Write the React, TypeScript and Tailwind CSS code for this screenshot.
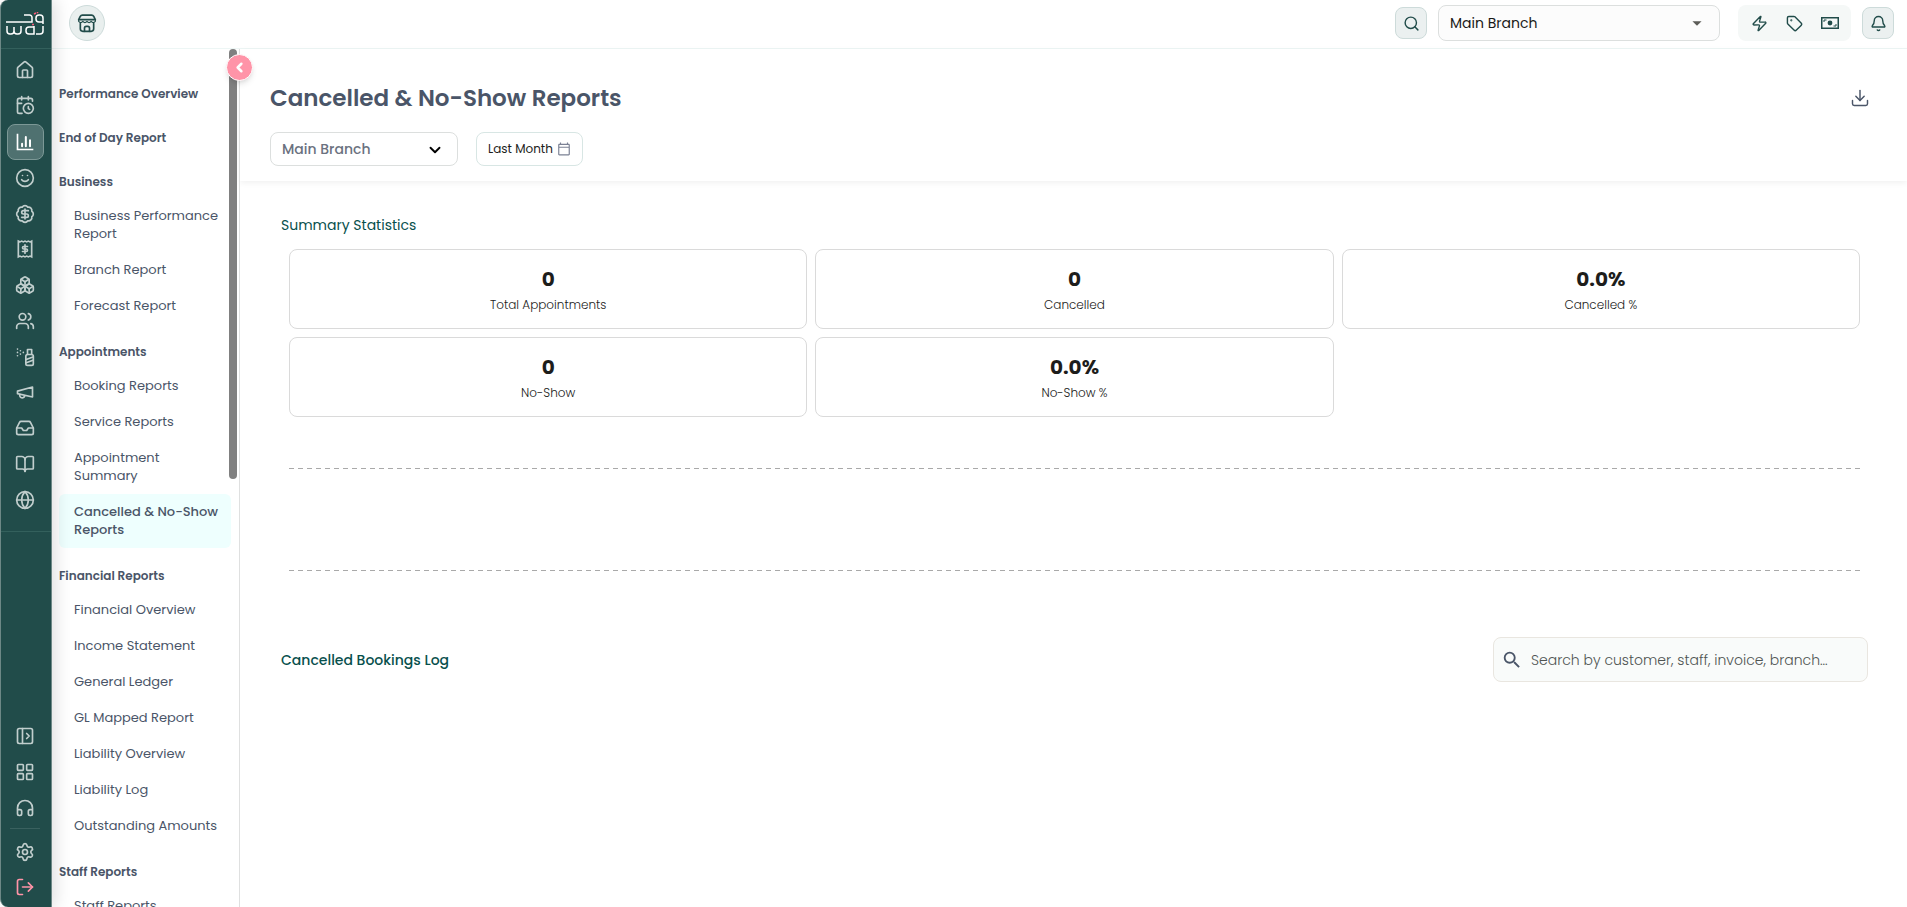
import type { ReactNode } from 'react';
import {
  BadgeDollarSign,
  Bell,
  BookOpen,
  Boxes,
  CalendarClock,
  ChevronDown,
  ChevronLeft,
  Download,
  Globe,
  Headphones,
  House,
  Inbox,
  LayoutGrid,
  LogOut,
  PanelLeftOpen,
  Search,
  Settings,
  Smile,
  Tag,
  Users,
  Zap,
} from 'lucide-react';
import { MdArrowDropDown, MdOutlineCalendarToday, MdSearch } from 'react-icons/md';

interface StrokeProps {
  className?: string;
  children: ReactNode;
}

function Stroke({ className = 'size-5', children }: StrokeProps) {
  return (
    <svg
      viewBox="0 0 24 24"
      className={className}
      fill="none"
      stroke="currentColor"
      strokeWidth="2"
      strokeLinecap="round"
      strokeLinejoin="round"
      aria-hidden="true"
    >
      {children}
    </svg>
  );
}

function ChartIcon() {
  return (
    <Stroke>
      <path d="M3 3v18h18" strokeLinecap="square" strokeLinejoin="miter" />
      <path d="M8.5 17v-3M13 17V6M18 17v-7" strokeWidth="2.4" />
    </Stroke>
  );
}

function ReceiptIcon() {
  return (
    <Stroke>
      <path
        d="M4 2.500l2 1 2-1 2 1 2-1 2 1 2-1 2 1 2-1v19l-2-1-2 1-2-1-2 1-2-1-2 1-2-1-2 1z"
        strokeLinejoin="miter"
      />
      <path d="M15 9h-4.500a1.500 1.500 0 0 0 0 3h3a1.500 1.500 0 0 1 0 3H9M12 7v10" />
    </Stroke>
  );
}

function SprayIcon() {
  return (
    <Stroke>
      <rect x="13" y="9" width="9" height="13" rx="2" />
      <path d="M15 9V3h5v6M13.5 15l8-3M13.5 19l8-3" />
      <path d="M3 2.500h.01M3 6.500h.01M3 10.500h.01M6.500 4.500h.01M6.500 8.500h.01M10 6.500h.01" />
    </Stroke>
  );
}

function MegaphoneIcon() {
  return (
    <Stroke>
      <path d="m3 11 18-5v12L3 14v-3z" />
      <path d="M11.6 16.8a3 3 0 1 1-5.8-1.6" />
    </Stroke>
  );
}

function StoreIcon() {
  return (
    <Stroke>
      <path d="M6.500 2.500h11a3 3 0 0 1 2.600 1.600L22 8H2l1.900-3.900a3 3 0 0 1 2.600-1.600z" />
      <path d="M2 8v2q2.500 3 5 0 2.500 3 5 0 2.500 3 5 0 2.500 3 5 0V8" strokeWidth="1.4" />
      <path d="M4 12.500V19a3 3 0 0 0 3 3h10a3 3 0 0 0 3-3v-6.500" />
      <path d="M9 22v-4a2 2 0 0 1 2-2h2a2 2 0 0 1 2 2v4" />
    </Stroke>
  );
}

function CashIcon() {
  return (
    <svg viewBox="0 0 18 12" className="h-3 w-[18px]" fill="none" stroke="currentColor" aria-hidden="true">
      <rect x="0.75" y="0.75" width="16.5" height="10.5" strokeWidth="1.5" />
      <circle cx="9" cy="6" r="2.4" fill="currentColor" stroke="none" />
      <path d="M3 5V3h2.500M15 7v2h-2.500" />
    </svg>
  );
}

function Logo() {
  return (
    <svg
      viewBox="0 0 38 24"
      className="h-6 w-[38px]"
      fill="none"
      stroke="white"
      strokeWidth="1.5"
      role="img"
      aria-label="Wajd"
    >
      <path d="M0 10h26V5.500a2.500 2.500 0 0 0-2.500-2.500H18" />
      <path d="M37 12V6a3 3 0 0 0-3-3h-1a3 3 0 0 0-3 3v1a3 3 0 0 0 3 3h4" />
      <path d="M1 14v5a3 3 0 0 0 3 3h1a3 3 0 0 0 3-3v-4 4a3 3 0 0 0 3 3h1a3 3 0 0 0 3-3v-5" />
      <path d="M28 14v8h-5a3 3 0 0 1-3-3v-1a3 3 0 0 1 3-3h5" />
      <path d="M37 14v5a3 3 0 0 1-3 3h-4" />
      <path d="M28 2l2-1M31 1l1-1M26 12.500h2" stroke="#ff5c7c" />
    </svg>
  );
}

const mainNav = [
  { label: 'Home', icon: <House size={20} /> },
  { label: 'Calendar', icon: <CalendarClock size={20} /> },
  { label: 'Reports', icon: <ChartIcon />, active: true },
  { label: 'Customers', icon: <Smile size={20} /> },
  { label: 'Offers', icon: <BadgeDollarSign size={20} /> },
  { label: 'Invoices', icon: <ReceiptIcon /> },
  { label: 'Inventory', icon: <Boxes size={20} /> },
  { label: 'Staff', icon: <Users size={20} /> },
  { label: 'Products', icon: <SprayIcon /> },
  { label: 'Marketing', icon: <MegaphoneIcon /> },
  { label: 'Inbox', icon: <Inbox size={20} /> },
  { label: 'Catalogue', icon: <BookOpen size={20} /> },
  { label: 'Website', icon: <Globe size={20} /> },
];

const reportGroups = [
  { title: 'Performance Overview', items: [] },
  { title: 'End of Day Report', items: [] },
  {
    title: 'Business',
    items: ['Business Performance Report', 'Branch Report', 'Forecast Report'],
  },
  {
    title: 'Appointments',
    items: ['Booking Reports', 'Service Reports', 'Appointment Summary', 'Cancelled & No-Show Reports'],
  },
  {
    title: 'Financial Reports',
    items: [
      'Financial Overview',
      'Income Statement',
      'General Ledger',
      'GL Mapped Report',
      'Liability Overview',
      'Liability Log',
      'Outstanding Amounts',
    ],
  },
  { title: 'Staff Reports', items: ['Staff Reports'] },
];

const currentReport = 'Cancelled & No-Show Reports';

const stats = [
  { value: '0', label: 'Total Appointments' },
  { value: '0', label: 'Cancelled' },
  { value: '0.0%', label: 'Cancelled %' },
  { value: '0', label: 'No-Show' },
  { value: '0.0%', label: 'No-Show %' },
];

interface RailButtonProps {
  label: string;
  active?: boolean;
  color?: string;
  children: ReactNode;
}

function RailButton({ label, active, color = 'text-[#c1cecd]', children }: RailButtonProps) {
  return (
    <button
      aria-label={label}
      className={`flex w-[37px] shrink-0 items-center justify-center rounded-lg border ${
        active ? 'h-9 border-[#7c9896] bg-[#4f7170] text-white' : `h-[35px] border-transparent ${color}`
      }`}
    >
      {children}
    </button>
  );
}

function Rail() {
  return (
    <aside className="z-20 flex w-[52px] shrink-0 flex-col rounded-l-lg border-x border-[#6d8886] bg-[#214c4a] shadow-[4px_0_16px_rgba(0,0,0,0.12)]">
      <div className="flex h-[49px] shrink-0 items-center justify-center border-b border-[#33605c] pr-0.5">
        <Logo />
      </div>
      <nav className="flex h-[483px] shrink-0 flex-col items-center justify-between border-b border-[#33605c] pt-[3px] pr-0.5 pb-3.5">
        {mainNav.map((item) => (
          <RailButton key={item.label} label={item.label} active={item.active}>
            {item.icon}
          </RailButton>
        ))}
      </nav>
      <div className="mt-auto flex flex-col items-center pr-0.5 pb-[3px]">
        <div className="flex flex-col gap-px">
          <RailButton label="Expand menu">
            <PanelLeftOpen size={20} />
          </RailButton>
          <RailButton label="Apps">
            <LayoutGrid size={20} />
          </RailButton>
          <RailButton label="Support">
            <Headphones size={20} />
          </RailButton>
        </div>
        <div className="mt-[3px] mb-[5px] h-px w-[30px] bg-[#3a615f]" />
        <RailButton label="Settings">
          <Settings size={20} />
        </RailButton>
        <RailButton label="Log out" color="text-[#ff94a8]">
          <LogOut size={20} />
        </RailButton>
      </div>
    </aside>
  );
}

function TopBar() {
  const square = 'flex size-8 items-center justify-center rounded-lg border border-[#cddbda] bg-[#ebf0f0]';
  return (
    <header className="flex h-[49px] shrink-0 items-center border-b border-[#edf6f5] pr-[13px] pb-0.5 pl-[17px] text-[#214c4a]">
      <button
        aria-label="Store"
        className="flex size-9 items-center justify-center rounded-full border border-[#cddbda] bg-[#e9efee]"
      >
        <StoreIcon />
      </button>
      <button aria-label="Search" className={`ml-auto ${square}`}>
        <Search size={17} />
      </button>
      <div className="relative ml-[11px]">
        <select
          aria-label="Branch"
          className="h-9 w-[282px] appearance-none rounded-lg border border-[#dcdfde] bg-[#fcfcfc] px-[11px] text-sm text-[#1a1a18]"
        >
          <option>Main Branch</option>
        </select>
        <MdArrowDropDown className="pointer-events-none absolute inset-y-0 right-3 my-auto size-[22px] text-[#5d5d58]" />
      </div>
      <div className="mr-[11px] ml-[18px] flex h-9 items-center rounded-lg bg-[#f5f8f7] px-1">
        <button aria-label="Quick actions" className="flex w-[35px] justify-center">
          <Zap size={17} />
        </button>
        <button aria-label="Tags" className="flex w-[35px] justify-center">
          <Tag size={17} />
        </button>
        <button aria-label="Cash" className="flex w-[35px] justify-center">
          <CashIcon />
        </button>
      </div>
      <button aria-label="Notifications" className={square}>
        <Bell size={17} />
      </button>
    </header>
  );
}

function ReportMenu() {
  return (
    <div className="relative flex w-[188px] shrink-0 border-r border-[#dfe0e0]">
      <nav className="min-w-0 flex-1 overflow-hidden pt-[17px] pr-2 pl-[7px] text-[#4a5568]">
        {reportGroups.map((group) => (
          <section key={group.title}>
            <h2 className="pt-[18px] pb-1.5 text-xs leading-5 font-semibold">{group.title}</h2>
            {group.items.map((item) => (
              <a
                key={item}
                href="#"
                className={`block rounded-md py-[9px] pr-3 pl-[15px] text-[13px] leading-[18px] ${
                  item === currentReport ? 'bg-[#eefffe] font-medium' : ''
                }`}
              >
                {item}
              </a>
            ))}
          </section>
        ))}
      </nav>
      <div className="absolute top-0 right-[2px] h-[430px] w-2 rounded-full bg-[#808080]" />
      <button
        aria-label="Collapse report menu"
        className="absolute top-[5px] -right-[14px] z-10 flex size-[27px] items-center justify-center rounded-full border border-white bg-[#ff94a8] text-white shadow-md"
      >
        <ChevronLeft size={15} strokeWidth={4} />
      </button>
    </div>
  );
}

function PageHeader() {
  return (
    <div className="pt-[31px] pr-[37px] pb-[15px] pl-[30px] shadow-[0_2px_6px_rgba(0,0,0,0.06)]">
      <div className="flex items-center justify-between">
        <h1 className="text-[23px] leading-9 font-semibold text-[#4a5568]">Cancelled &amp; No-Show Reports</h1>
        <button aria-label="Download" className="text-[#4a5568]">
          <Download size={20} strokeWidth={1.75} />
        </button>
      </div>
      <div className="mt-4 flex gap-[18px]">
        <div className="relative">
          <select
            aria-label="Report branch"
            className="h-[34px] w-[188px] appearance-none rounded-lg border border-[#dcdfde] bg-white px-[11px] text-sm font-medium text-[#6b7280]"
          >
            <option>Main Branch</option>
          </select>
          <ChevronDown
            size={18}
            strokeWidth={2.5}
            className="pointer-events-none absolute top-[9px] right-3.5 text-black"
          />
        </div>
        <button className="flex h-[34px] items-center gap-1 rounded-lg border border-[#d8e6e4] px-[11px] text-xs text-[#1d1d1b]">
          Last Month
          <MdOutlineCalendarToday size={14} className="text-[#7b8194]" />
        </button>
      </div>
    </div>
  );
}

function DashedRule() {
  return <div className="h-px bg-[repeating-linear-gradient(to_right,#a9a9a9_0_5px,transparent_5px_9px)]" />;
}

export default function App() {
  return (
    <div className="flex h-screen overflow-hidden bg-white font-[Poppins,Inter,sans-serif]">
      <Rail />
      <div className="flex min-w-0 flex-1 flex-col">
        <TopBar />
        <div className="flex min-h-0 flex-1">
          <ReportMenu />
          <main className="min-w-0 flex-1">
            <PageHeader />
            <section className="pt-[34px] pr-[39px] pl-[41px]">
              <h2 className="text-sm leading-5 text-[#08504d]">Summary Statistics</h2>
              <div className="mt-3.5 grid grid-cols-3 gap-2 px-2">
                {stats.map((stat) => (
                  <div
                    key={stat.label}
                    className="flex h-20 flex-col items-center justify-center rounded-lg border border-[#dadada] pt-1"
                  >
                    <span className="text-xl leading-7 font-bold text-[#1d1d1b]">{stat.value}</span>
                    <span className="text-xs leading-6 font-light text-[#1d1d1b]">{stat.label}</span>
                  </div>
                ))}
              </div>
              {/* empty chart area */}
              <div className="mt-[51px] flex h-[103px] flex-col justify-between px-2">
                <DashedRule />
                <DashedRule />
              </div>
              <div className="mt-[66px] flex items-center justify-between">
                <h2 className="text-sm leading-5 font-medium text-[#08504d]">Cancelled Bookings Log</h2>
                <label className="flex h-[45px] w-[375px] items-center gap-2 rounded-lg border border-[#e9e6e0] bg-[#f9fbfa] px-[7px]">
                  <MdSearch size={22} className="shrink-0 text-[#4a5568]" />
                  <input
                    type="text"
                    aria-label="Search cancelled bookings"
                    placeholder="Search by customer, staff, invoice, branch..."
                    className="min-w-0 flex-1 bg-transparent text-sm font-light text-[#4a5568] outline-none placeholder:text-[#4f5452]"
                  />
                </label>
              </div>
            </section>
          </main>
        </div>
      </div>
    </div>
  );
}
